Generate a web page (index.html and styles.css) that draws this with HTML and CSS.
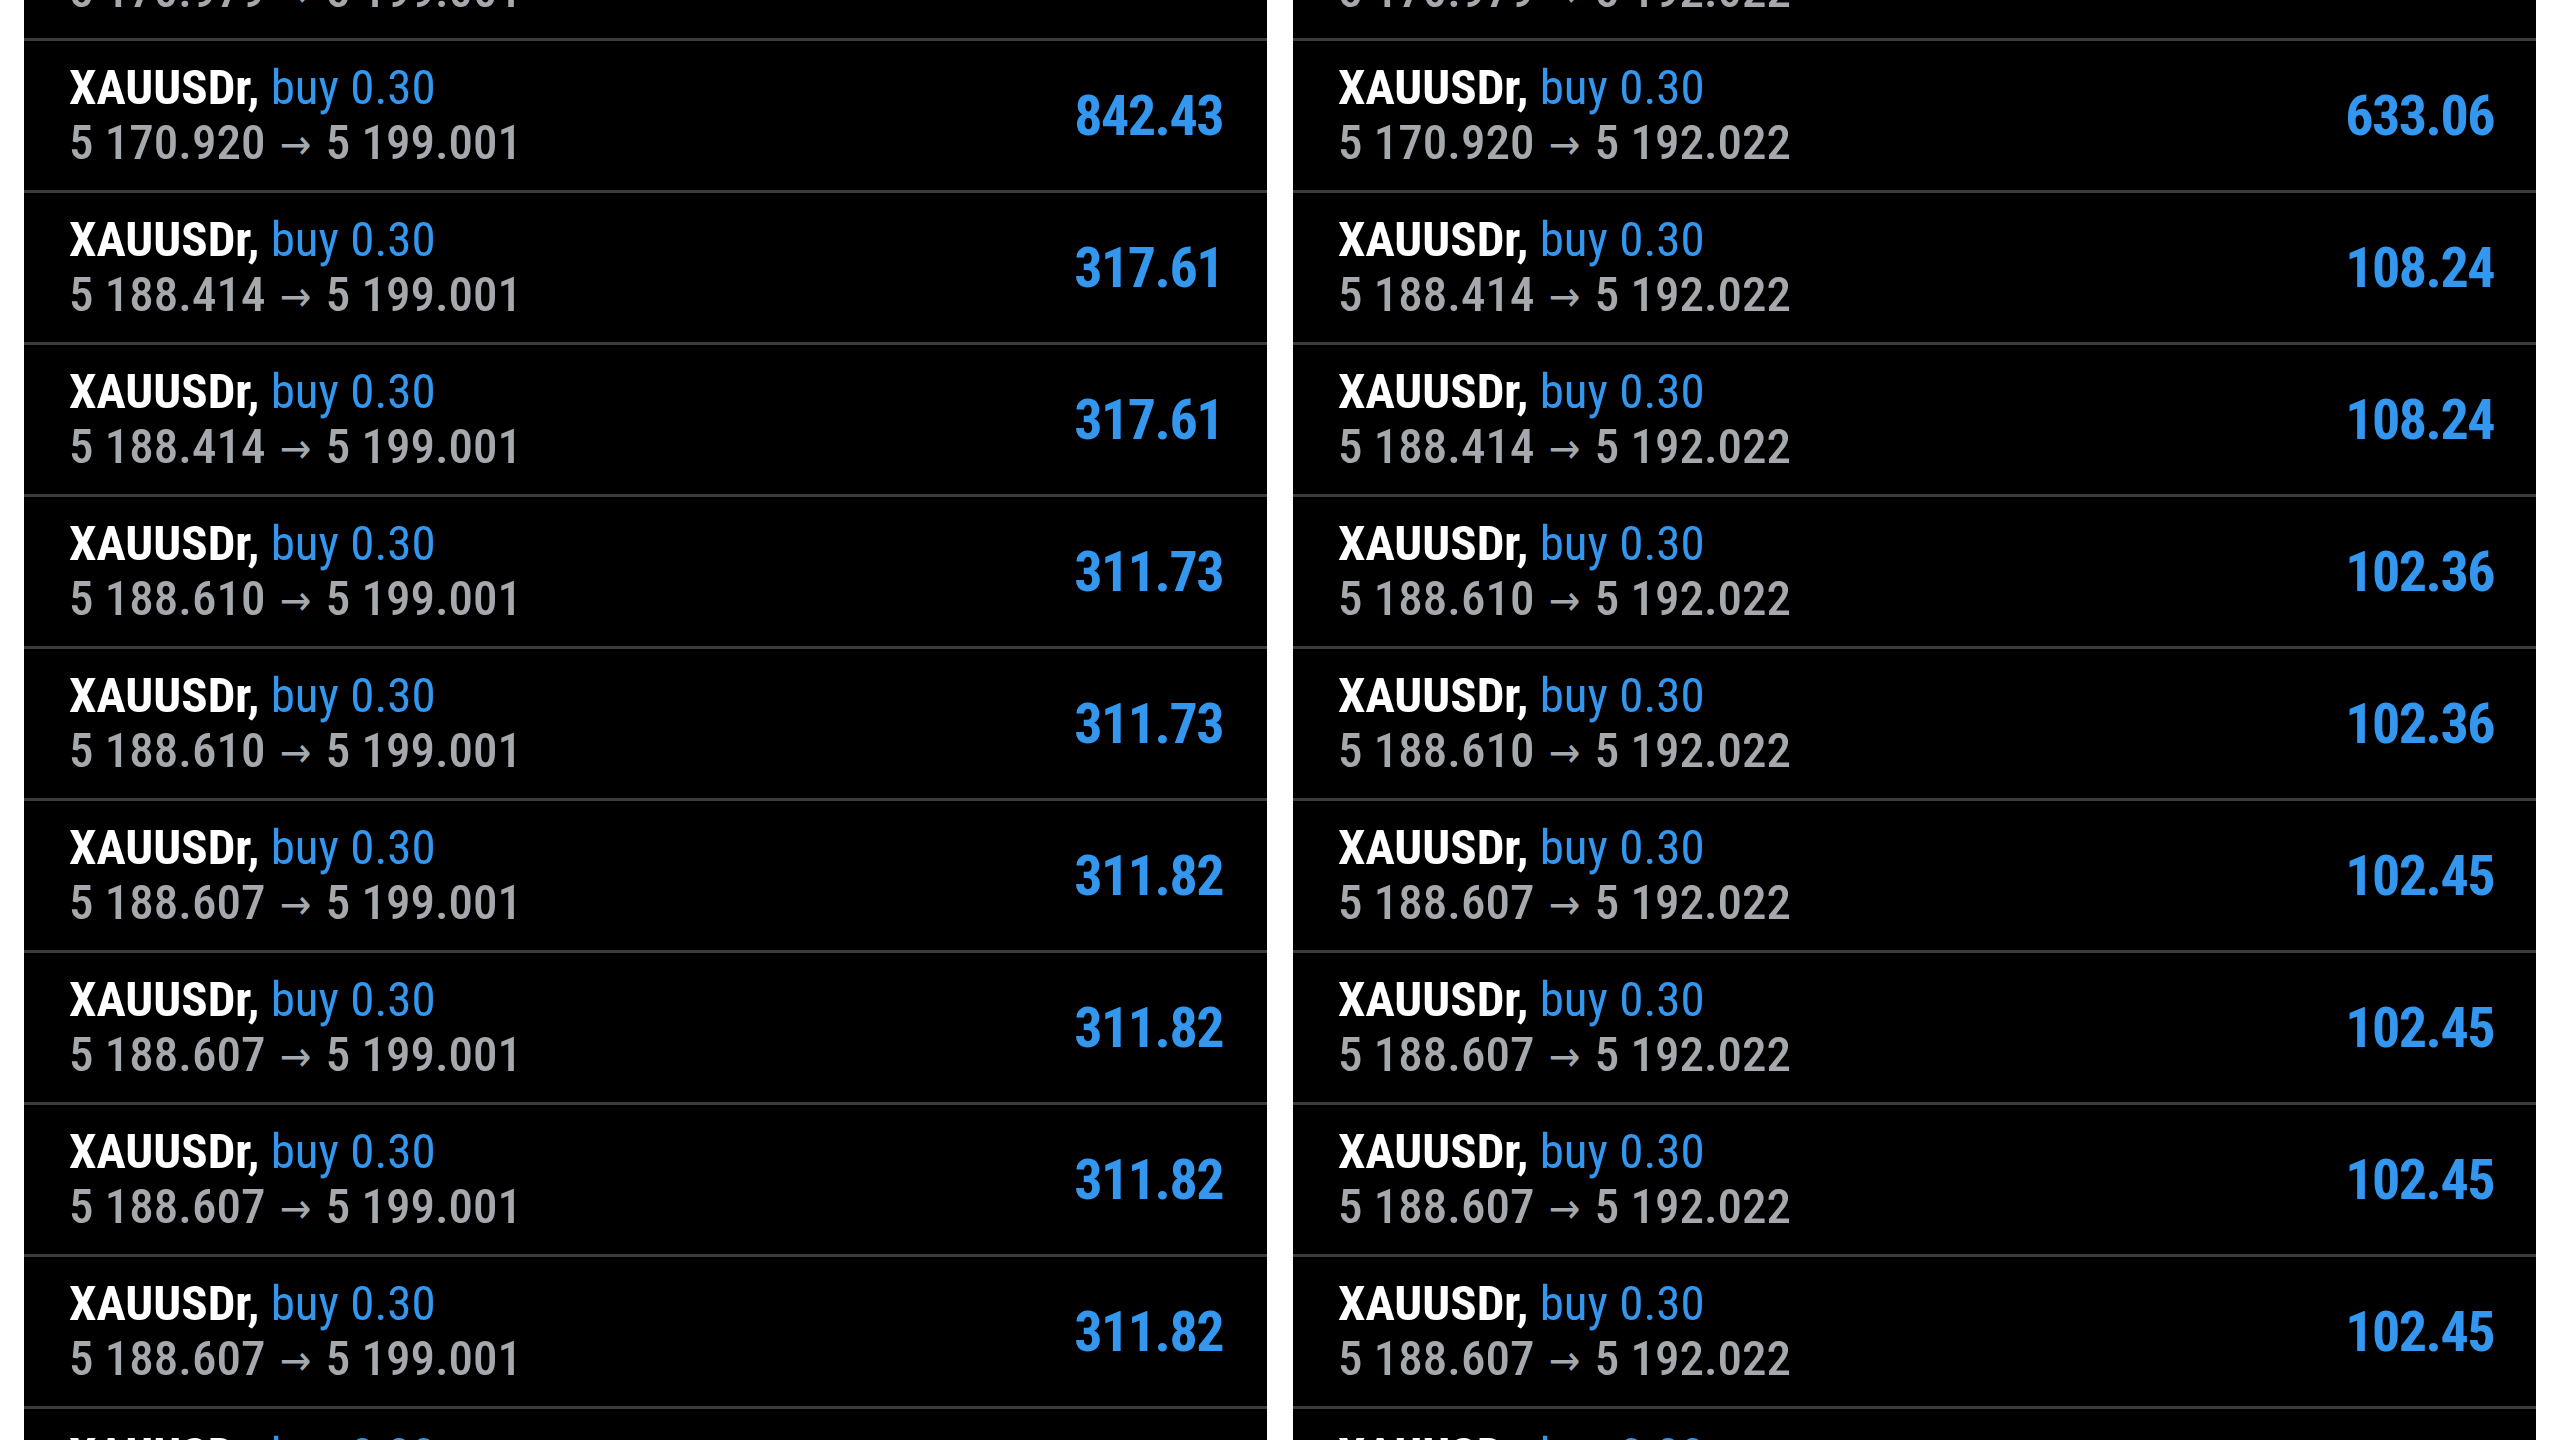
FILE: index.html
```html
<!DOCTYPE html>
<html>
<head>
    <title>Positions</title>
    <link rel="stylesheet" href="styles.css">
</head>
<body>
    <div class="columns">
        <div class="panel panel-left">
            <div class="trade">
                <div class="info">
                    <div class="title"><span class="symbol">XAUUSDr,</span> <span class="side">buy 0.30</span></div>
                    <div class="prices">5 170.979 <span class="arrow">&rarr;</span> 5 199.001</div>
                </div>
                <div class="profit">840.66</div>
            </div>
            <div class="trade">
                <div class="info">
                    <div class="title"><span class="symbol">XAUUSDr,</span> <span class="side">buy 0.30</span></div>
                    <div class="prices">5 170.920 <span class="arrow">&rarr;</span> 5 199.001</div>
                </div>
                <div class="profit">842.43</div>
            </div>
            <div class="trade">
                <div class="info">
                    <div class="title"><span class="symbol">XAUUSDr,</span> <span class="side">buy 0.30</span></div>
                    <div class="prices">5 188.414 <span class="arrow">&rarr;</span> 5 199.001</div>
                </div>
                <div class="profit">317.61</div>
            </div>
            <div class="trade">
                <div class="info">
                    <div class="title"><span class="symbol">XAUUSDr,</span> <span class="side">buy 0.30</span></div>
                    <div class="prices">5 188.414 <span class="arrow">&rarr;</span> 5 199.001</div>
                </div>
                <div class="profit">317.61</div>
            </div>
            <div class="trade">
                <div class="info">
                    <div class="title"><span class="symbol">XAUUSDr,</span> <span class="side">buy 0.30</span></div>
                    <div class="prices">5 188.610 <span class="arrow">&rarr;</span> 5 199.001</div>
                </div>
                <div class="profit">311.73</div>
            </div>
            <div class="trade">
                <div class="info">
                    <div class="title"><span class="symbol">XAUUSDr,</span> <span class="side">buy 0.30</span></div>
                    <div class="prices">5 188.610 <span class="arrow">&rarr;</span> 5 199.001</div>
                </div>
                <div class="profit">311.73</div>
            </div>
            <div class="trade">
                <div class="info">
                    <div class="title"><span class="symbol">XAUUSDr,</span> <span class="side">buy 0.30</span></div>
                    <div class="prices">5 188.607 <span class="arrow">&rarr;</span> 5 199.001</div>
                </div>
                <div class="profit">311.82</div>
            </div>
            <div class="trade">
                <div class="info">
                    <div class="title"><span class="symbol">XAUUSDr,</span> <span class="side">buy 0.30</span></div>
                    <div class="prices">5 188.607 <span class="arrow">&rarr;</span> 5 199.001</div>
                </div>
                <div class="profit">311.82</div>
            </div>
            <div class="trade">
                <div class="info">
                    <div class="title"><span class="symbol">XAUUSDr,</span> <span class="side">buy 0.30</span></div>
                    <div class="prices">5 188.607 <span class="arrow">&rarr;</span> 5 199.001</div>
                </div>
                <div class="profit">311.82</div>
            </div>
            <div class="trade">
                <div class="info">
                    <div class="title"><span class="symbol">XAUUSDr,</span> <span class="side">buy 0.30</span></div>
                    <div class="prices">5 188.607 <span class="arrow">&rarr;</span> 5 199.001</div>
                </div>
                <div class="profit">311.82</div>
            </div>
            <div class="trade">
                <div class="info">
                    <div class="title"><span class="symbol">XAUUSDr,</span> <span class="side">buy 0.30</span></div>
                    <div class="prices">5 188.607 <span class="arrow">&rarr;</span> 5 199.001</div>
                </div>
                <div class="profit">311.82</div>
            </div>
        </div>
        <div class="panel panel-right">
            <div class="trade">
                <div class="info">
                    <div class="title"><span class="symbol">XAUUSDr,</span> <span class="side">buy 0.30</span></div>
                    <div class="prices">5 170.979 <span class="arrow">&rarr;</span> 5 192.022</div>
                </div>
                <div class="profit">631.29</div>
            </div>
            <div class="trade">
                <div class="info">
                    <div class="title"><span class="symbol">XAUUSDr,</span> <span class="side">buy 0.30</span></div>
                    <div class="prices">5 170.920 <span class="arrow">&rarr;</span> 5 192.022</div>
                </div>
                <div class="profit">633.06</div>
            </div>
            <div class="trade">
                <div class="info">
                    <div class="title"><span class="symbol">XAUUSDr,</span> <span class="side">buy 0.30</span></div>
                    <div class="prices">5 188.414 <span class="arrow">&rarr;</span> 5 192.022</div>
                </div>
                <div class="profit">108.24</div>
            </div>
            <div class="trade">
                <div class="info">
                    <div class="title"><span class="symbol">XAUUSDr,</span> <span class="side">buy 0.30</span></div>
                    <div class="prices">5 188.414 <span class="arrow">&rarr;</span> 5 192.022</div>
                </div>
                <div class="profit">108.24</div>
            </div>
            <div class="trade">
                <div class="info">
                    <div class="title"><span class="symbol">XAUUSDr,</span> <span class="side">buy 0.30</span></div>
                    <div class="prices">5 188.610 <span class="arrow">&rarr;</span> 5 192.022</div>
                </div>
                <div class="profit">102.36</div>
            </div>
            <div class="trade">
                <div class="info">
                    <div class="title"><span class="symbol">XAUUSDr,</span> <span class="side">buy 0.30</span></div>
                    <div class="prices">5 188.610 <span class="arrow">&rarr;</span> 5 192.022</div>
                </div>
                <div class="profit">102.36</div>
            </div>
            <div class="trade">
                <div class="info">
                    <div class="title"><span class="symbol">XAUUSDr,</span> <span class="side">buy 0.30</span></div>
                    <div class="prices">5 188.607 <span class="arrow">&rarr;</span> 5 192.022</div>
                </div>
                <div class="profit">102.45</div>
            </div>
            <div class="trade">
                <div class="info">
                    <div class="title"><span class="symbol">XAUUSDr,</span> <span class="side">buy 0.30</span></div>
                    <div class="prices">5 188.607 <span class="arrow">&rarr;</span> 5 192.022</div>
                </div>
                <div class="profit">102.45</div>
            </div>
            <div class="trade">
                <div class="info">
                    <div class="title"><span class="symbol">XAUUSDr,</span> <span class="side">buy 0.30</span></div>
                    <div class="prices">5 188.607 <span class="arrow">&rarr;</span> 5 192.022</div>
                </div>
                <div class="profit">102.45</div>
            </div>
            <div class="trade">
                <div class="info">
                    <div class="title"><span class="symbol">XAUUSDr,</span> <span class="side">buy 0.30</span></div>
                    <div class="prices">5 188.607 <span class="arrow">&rarr;</span> 5 192.022</div>
                </div>
                <div class="profit">102.45</div>
            </div>
            <div class="trade">
                <div class="info">
                    <div class="title"><span class="symbol">XAUUSDr,</span> <span class="side">buy 0.30</span></div>
                    <div class="prices">5 188.607 <span class="arrow">&rarr;</span> 5 192.022</div>
                </div>
                <div class="profit">102.45</div>
            </div>
        </div>
    </div>
</body>
</html>
```
FILE: styles.css
```css
body {
    margin: 0;
    padding: 0;
    height: 1440px;
    overflow: hidden;
    background-color: #fff;
    font-family: "Roboto Condensed", "Liberation Sans Narrow", "DejaVu Sans Condensed", Roboto, sans-serif;
    font-stretch: condensed;
}
.columns {
    display: grid;
    grid-template-columns: 1243px 1243px;
    column-gap: 26px;
    padding-left: 24px;
    height: 1440px;
}
.panel {
    background-color: #000;
    margin-top: -111px;
}
.trade {
    display: flex;
    justify-content: space-between;
    align-items: center;
    height: 149px;
    border-bottom: 3px solid #3c3c3f;
}
.panel-left .trade {
    padding: 0 44px 0 45px;
}
.panel-right .trade {
    padding: 0 42px 0 45px;
}
.info {
    font-size: 49px;
    line-height: 55px;
}
.symbol {
    color: #fff;
    font-weight: bold;
}
.side {
    color: #3497ef;
}
.prices {
    color: #a5a8ad;
    font-weight: 500;
}
.arrow {
    font-size: 42px;
    margin: 0 3px;
}
.profit {
    color: #3497ef;
    font-size: 56px;
    font-weight: bold;
    letter-spacing: -1.5px;
}
```
